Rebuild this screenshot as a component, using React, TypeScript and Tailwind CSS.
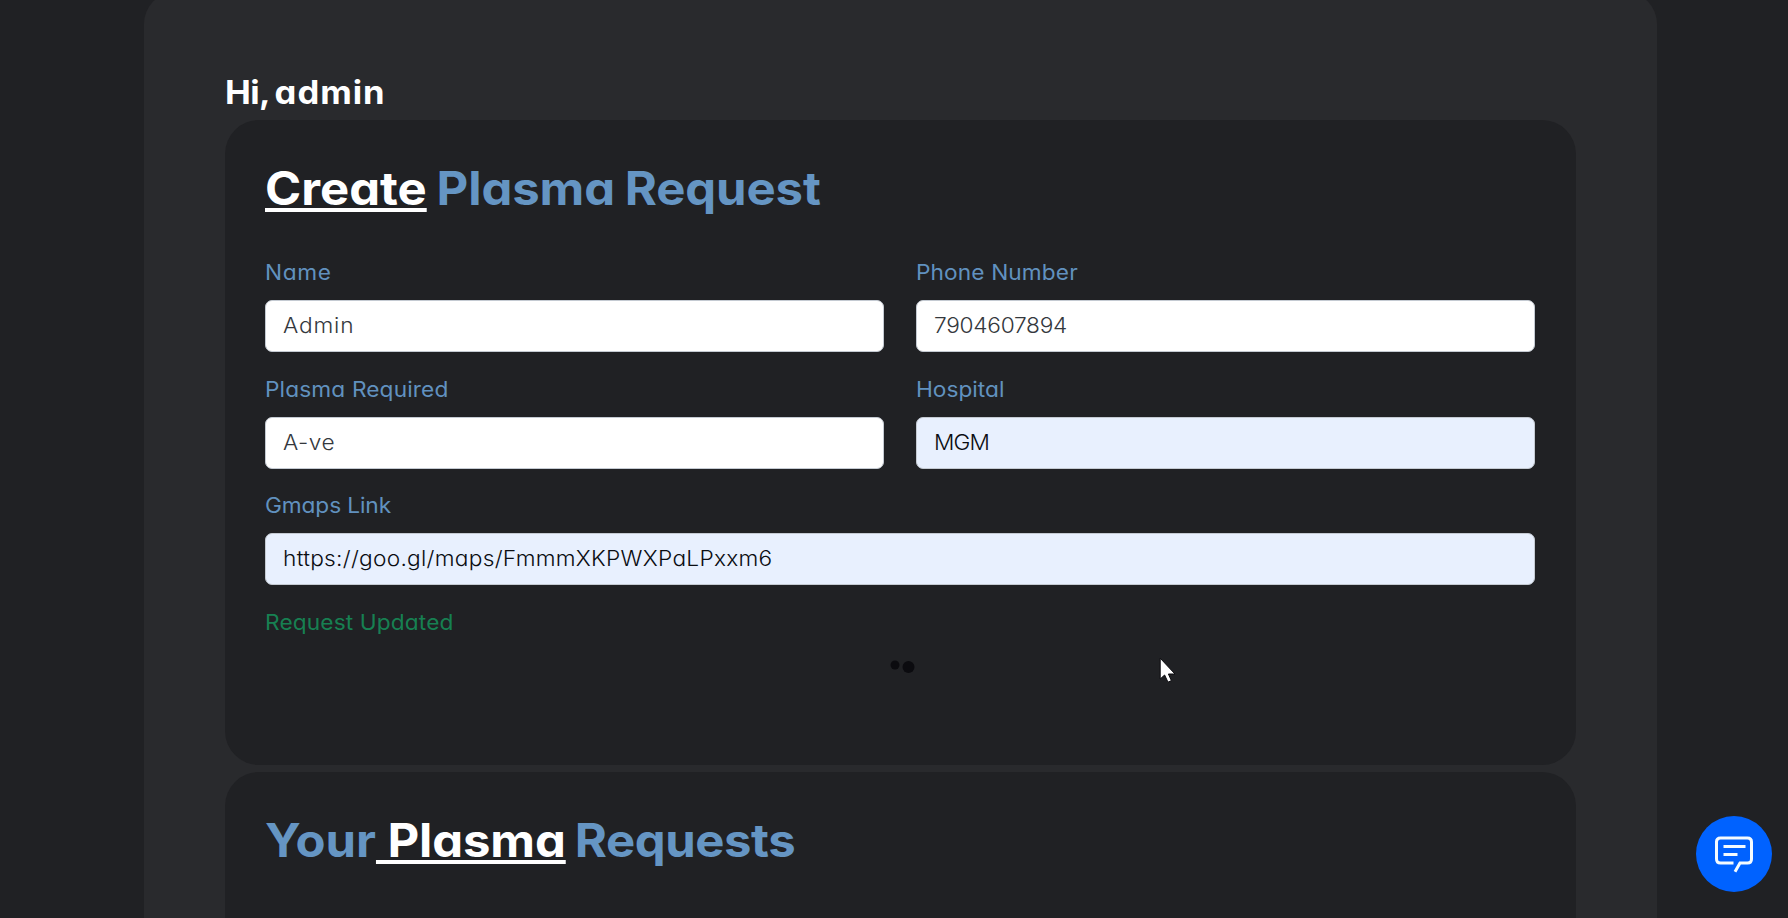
type FieldProps = {
  label: string;
  labelClass: string;
  value: string;
  valueClass: string;
  autofilled?: boolean;
  className?: string;
};

function Field({ label, labelClass, value, valueClass, autofilled, className = "" }: FieldProps) {
  return (
    <div className={className}>
      <div className={`h-8 origin-left scale-x-[1.08] text-[21px] leading-[34px] whitespace-pre text-[#6191bf] ${labelClass}`}>{label}</div>
      <div
        className={`mt-3 flex h-[52px] items-center rounded-[7px] border border-[#c4cad2] px-[16.5px] text-[21px] ${
          autofilled ? "bg-[#e8f0fe] text-[#0b0d12]" : "bg-white text-[#34383d]"
        }`}
      >
        <span className={`origin-left scale-x-[1.08] leading-[50px] font-[360] whitespace-pre ${valueClass}`}>{value}</span>
      </div>
    </div>
  );
}

function ChatButton() {
  return (
    <button aria-label="Open chat" className="absolute right-[16.5px] bottom-[26px] flex size-[76px] items-center justify-center rounded-full bg-[#0062ff]">
      <svg width="42" height="42" viewBox="0 0 42 42" fill="none" stroke="#f4fbff" strokeWidth="3">
        <path d="M20.5 30H7.5Q3.5 30 3.5 26V9Q3.5 5 7.5 5H34.5Q38.5 5 38.5 9V26Q38.5 30 34.5 30H27L22 38.8" />
        <path d="M10.5 13.5H32.5M10.5 21.5H24.5" />
      </svg>
    </button>
  );
}

export default function App() {
  return (
    <div className="relative h-[918px] overflow-hidden bg-[#202124] font-['Inter','Open_Sans',sans-serif] font-[370] [font-feature-settings:'cv11']">
      <main className="-mt-2 ml-36 h-[960px] w-[1513px] rounded-[32px] bg-[#292a2d] px-[81px] pt-[76px]">
        <h2 className="h-[52px] origin-left scale-x-[1.08] text-[32px] leading-[49px] font-bold tracking-[0.9px] text-white">
          <span className="tracking-[-0.6px]">Hi,</span>
          <span className="[word-spacing:-4px]"> admin</span>
        </h2>

        <section className="h-[645px] rounded-[34px] bg-[#202124] pt-[36px] pr-[41px] pl-[40px]">
          <h1 className="h-[100px] origin-left scale-x-[1.065] text-[46px] leading-[64px] font-bold whitespace-pre text-[#6595c3]">
            <span className="text-white underline decoration-[4px] underline-offset-[3px] [text-decoration-skip-ink:none]">Create</span>
            <span className="tracking-[-0.1px] [word-spacing:-1.5px]"> Plasma Request</span>
          </h1>
          <div className="grid grid-cols-2 gap-x-8 gap-y-[20.7px]">
            <Field label="Name" labelClass="tracking-[0.6px]" value="Admin" valueClass="tracking-[0.75px]" />
            <Field label="Phone Number" labelClass="tracking-[0.1px]" value="7904607894" valueClass="tracking-[-0.25px]" />
            <Field label="Plasma Required" labelClass="tracking-[0.12px]" value="A-ve" valueClass="tracking-[0.5px]" />
            <Field label="Hospital" labelClass="tracking-[0px]" value="MGM" valueClass="tracking-[-0.8px]" autofilled />
            <Field
              className="col-span-2"
              label="Gmaps Link"
              labelClass="tracking-[-0.1px]"
              value="https://goo.gl/maps/FmmmXKPWXPaLPxxm6"
              valueClass="tracking-[0.25px]"
              autofilled
            />
          </div>
          <p className="mt-[21px] h-8 origin-left scale-x-[1.08] text-[21px] leading-[33px] tracking-[0.12px] text-[#178052]">Request Updated</p>
          <div className="flex justify-center pt-[19px]">
            <svg width="60" height="20" viewBox="0 0 60 20" fill="#0b0b0f">
              <circle cx="25" cy="8" r="4.5" />
              <circle cx="38.5" cy="10" r="6" />
            </svg>
          </div>
        </section>

        <section className="mt-[7px] h-[300px] rounded-[34px] bg-[#202124] pt-[36px] pr-[41px] pl-[40px]">
          <h1 className="origin-left scale-x-[1.065] text-[46px] leading-[64px] font-bold whitespace-pre text-[#6595c3]">
            Your
            <span className="tracking-[-0.1px] text-white underline decoration-[4px] underline-offset-[3px] [text-decoration-skip-ink:none]"> Plasma</span>
            <span className="tracking-[-0.4px] [word-spacing:-2px]"> Requests</span>
          </h1>
        </section>
      </main>

      <svg className="absolute top-[656.5px] left-[1159px]" width="18" height="27" viewBox="0 0 18 27">
        <path d="M1.2 1.2V22L5.6 18L9 25.2L12.4 23.6L9.4 17H16Z" fill="#fff" stroke="#0b0b0f" strokeWidth="1" />
      </svg>
      <ChatButton />
    </div>
  );
}
